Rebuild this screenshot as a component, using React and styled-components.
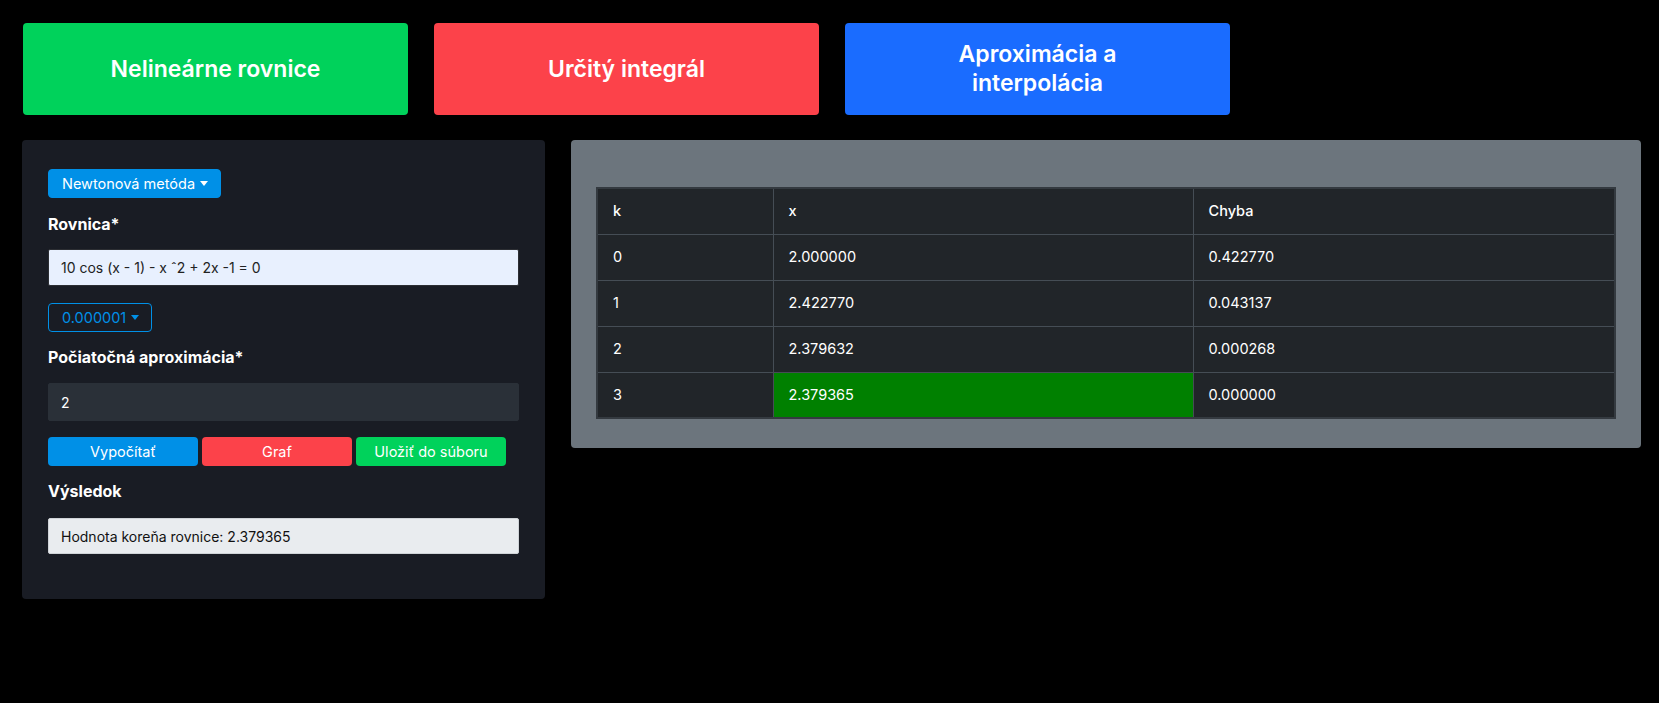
import React from "react";
import styled, { createGlobalStyle } from "styled-components";

const Global = createGlobalStyle`
  html, body { margin: 0; padding: 0; background: #000; }
  body { font-family: Inter, Roboto, "Noto Sans", sans-serif; color: #fff; }
  * { box-sizing: border-box; }
`;

const Page = styled.div`
  padding: 23px 18px 0 22px;
  min-height: 703px;
  background: #000;
`;

const TopBar = styled.div`
  display: flex;
  gap: 26px;
  padding-left: 1px;
`;

const BigButton = styled.button`
  width: 385px;
  height: 92px;
  border: none;
  border-radius: 4px;
  background: ${(p) => p.$bg};
  color: #fff;
  font-family: Inter, Roboto, sans-serif;
  font-size: 23px;
  font-weight: 600;
  line-height: 29px;
  padding: 0 72px;
  text-align: center;
  cursor: pointer;
`;

const Main = styled.div`
  display: grid;
  grid-template-columns: 523px 1070px;
  gap: 26px;
  margin-top: 25px;
  align-items: start;
`;

const Card = styled.div`
  background: #191c24;
  border-radius: 4px;
  padding: 29px 26px 45px 26px;
`;

const Dropdown = styled.button`
  display: inline-flex;
  align-items: center;
  gap: 5px;
  height: 29px;
  padding: 0 12px 0 13px;
  border-radius: 4px;
  font-family: Inter, Roboto, sans-serif;
  font-size: 14.5px;
  cursor: pointer;
  background: ${(p) => (p.$outline ? "transparent" : "#0090e7")};
  color: ${(p) => (p.$outline ? "#0090e7" : "#fff")};
  border: 1px solid #0090e7;
  &::after {
    content: "";
    border-top: 5px solid currentColor;
    border-left: 4.5px solid transparent;
    border-right: 4.5px solid transparent;
    margin-top: -1px;
  }
`;

const Label = styled.div`
  font-size: 16px;
  font-weight: 700;
  line-height: 19px;
  margin-top: ${(p) => p.$mt}px;
  margin-bottom: ${(p) => p.$mb}px;
  color: #fff;
`;

const Field = styled.div`
  height: ${(p) => p.$h}px;
  display: flex;
  align-items: center;
  padding: 0 12px;
  font-size: 14px;
  border: 1px solid ${(p) => p.$border};
  background: ${(p) => p.$bg};
  color: ${(p) => p.$color};
  border-radius: 2px;
  margin-bottom: ${(p) => p.$mb || 0}px;
`;

const ButtonRow = styled.div`
  display: flex;
  gap: 4px;
  margin-top: 16px;
`;

const SmallButton = styled.button`
  width: 150px;
  height: 29px;
  border: none;
  border-radius: 4px;
  background: ${(p) => p.$bg};
  color: #fff;
  font-family: Inter, Roboto, sans-serif;
  font-size: 14.5px;
  cursor: pointer;
`;

const ResultCard = styled.div`
  background: #6c757d;
  border-radius: 4px;
  padding: 47px 25px 29px 25px;
`;

const Table = styled.table`
  width: 100%;
  border-collapse: collapse;
  background: #212529;
  border: 2px solid #343a40;
  font-size: 14.5px;
  color: #fff;
`;

const Cell = styled.td`
  height: 46px;
  padding: 0 15px;
  border: 1px solid #454d55;
  line-height: 16px;
  background: ${(p) => (p.$hit ? "#008000" : "transparent")};
  vertical-align: middle;
`;

const HeadCell = styled(Cell).attrs({ as: "th" })`
  font-weight: 500;
  text-align: left;
`;

const rows = [
  ["0", "2.000000", "0.422770"],
  ["1", "2.422770", "0.043137"],
  ["2", "2.379632", "0.000268"],
  ["3", "2.379365", "0.000000"],
];

export default function App() {
  return (
    <Page>
      <Global />
      <TopBar>
        <BigButton $bg="#00d25b">Nelineárne rovnice</BigButton>
        <BigButton $bg="#fc424a">Určitý integrál</BigButton>
        <BigButton $bg="#1a6cff">Aproximácia a interpolácia</BigButton>
      </TopBar>
      <Main>
        <Card>
          <Dropdown>Newtonová metóda</Dropdown>
          <Label $mt={17} $mb={15}>Rovnica*</Label>
          <Field $h={37} $bg="#e8f0fe" $color="#222" $border="#2c2e33" $mb={17}>
            10 cos (x - 1) - x ˆ2 + 2x -1 = 0
          </Field>
          <Dropdown $outline>0.000001</Dropdown>
          <Label $mt={16} $mb={16}>Počiatočná aproximácia*</Label>
          <Field $h={38} $bg="#2a3038" $color="#fff" $border="#2a3038">
            2
          </Field>
          <ButtonRow>
            <SmallButton $bg="#0090e7">Vypočítať</SmallButton>
            <SmallButton $bg="#fc424a">Graf</SmallButton>
            <SmallButton $bg="#00d25b">Uložiť do súboru</SmallButton>
          </ButtonRow>
          <Label $mt={16} $mb={17}>Výsledok</Label>
          <Field $h={36} $bg="#e9ecef" $color="#111" $border="#cfd3d7">
            Hodnota koreňa rovnice: 2.379365
          </Field>
        </Card>
        <ResultCard>
          <Table>
            <colgroup>
              <col style={{ width: 176 }} />
              <col style={{ width: 420 }} />
              <col />
            </colgroup>
            <thead>
              <tr>
                <HeadCell>k</HeadCell>
                <HeadCell>x</HeadCell>
                <HeadCell>Chyba</HeadCell>
              </tr>
            </thead>
            <tbody>
              {rows.map((r, i) => (
                <tr key={r[0]}>
                  <Cell>{r[0]}</Cell>
                  <Cell $hit={i === rows.length - 1}>{r[1]}</Cell>
                  <Cell>{r[2]}</Cell>
                </tr>
              ))}
            </tbody>
          </Table>
        </ResultCard>
      </Main>
    </Page>
  );
}
